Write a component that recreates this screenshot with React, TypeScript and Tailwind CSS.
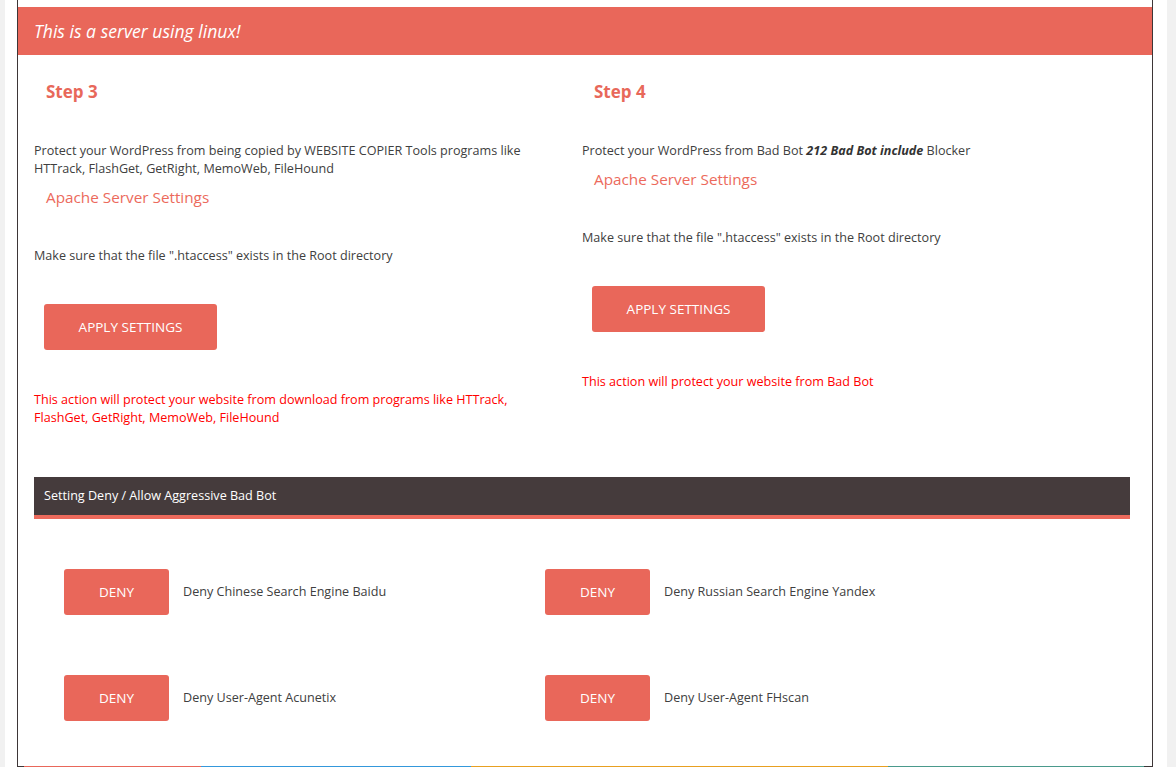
const font = { fontFamily: '"Open Sans", "Noto Sans", sans-serif' };

interface Step {
  title: string;
  intro: React.ReactNode;
  note: string;
}

const steps: Step[] = [
  {
    title: "Step 3",
    intro:
      "Protect your WordPress from being copied by WEBSITE COPIER Tools programs like HTTrack, FlashGet, GetRight, MemoWeb, FileHound",
    note: "This action will protect your website from download from programs like HTTrack, FlashGet, GetRight, MemoWeb, FileHound",
  },
  {
    title: "Step 4",
    intro: (
      <>
        Protect your WordPress from Bad Bot{" "}
        <b className="italic text-[#333]">212 Bad Bot include</b> Blocker
      </>
    ),
    note: "This action will protect your website from Bad Bot",
  },
];

const denyRules = [
  "Deny Chinese Search Engine Baidu",
  "Deny Russian Search Engine Yandex",
  "Deny User-Agent Acunetix",
  "Deny User-Agent FHscan",
];

function StepColumn({ step }: { step: Step }) {
  return (
    <div className="flex flex-col items-start pr-5">
      <h3 className="pl-3 text-[17px] leading-6 font-bold text-[#e8685a]">
        {step.title}
      </h3>
      <p className="mt-[38px] text-[12.6px] leading-[18px] text-[#404040]">
        {step.intro}
      </p>
      <p className="mt-2 pl-3 text-[15.3px] leading-[22px] text-[#ec6a5c]">
        Apache Server Settings
      </p>
      <p className="mt-[39px] text-[12.6px] leading-[18px] text-[#404040]">
        Make sure that the file ".htaccess" exists in the Root directory
      </p>
      <button className="mt-[39px] ml-[10px] h-[46px] w-[173px] rounded-[3px] bg-[#e9675a] text-[13.5px] text-white uppercase">
        Apply Settings
      </button>
      <p className="mt-[41px] text-[12.6px] leading-[18px] text-[#ff0000]">
        {step.note}
      </p>
    </div>
  );
}

export default function App() {
  return (
    <div
      className="flex h-[767px] w-[1176px] overflow-hidden bg-white"
      style={font}
    >
      <div className="w-[5px] bg-[#f1f1f1]" />
      <div className="w-[12px]" />

      <div className="flex w-[1136px] flex-col border-x border-[#3d3637]">
        <div className="mt-[7px] flex h-12 items-center bg-[#e9675a] pl-4">
          <span className="text-[17.6px] text-white italic">
            This is a server using linux!
          </span>
        </div>

        <div className="flex flex-1 flex-col pt-[25px] pr-[22px] pl-4">
          <div className="grid grid-cols-2">
            {steps.map((step) => (
              <StepColumn key={step.title} step={step} />
            ))}
          </div>

          <div className="mt-[50px] flex h-[42px] items-center border-b-4 border-[#ec6a5c] bg-[#453b3c] pl-[10px]">
            <span className="text-[12.6px] text-white">
              Setting Deny / Allow Aggressive Bad Bot
            </span>
          </div>

          <div className="grid grid-cols-[481px_1fr] gap-y-[60px] pt-[50px] pl-[30px]">
            {denyRules.map((rule) => (
              <div key={rule} className="flex items-center">
                <button className="h-[46px] w-[105px] rounded-[3px] bg-[#e9675a] text-[13.5px] text-white">
                  DENY
                </button>
                <span className="ml-[14px] text-[12.6px] text-[#404040]">
                  {rule}
                </span>
              </div>
            ))}
          </div>
        </div>

        <div className="flex h-px">
          <div className="w-[6px] bg-[#3d3637]" />
          <div className="w-[177px] bg-[#e9675a]" />
          <div className="w-[270px] bg-[#3498db]" />
          <div className="w-[417px] bg-[#e8a021]" />
          <div className="flex-1 bg-[#4a9a8c]" />
          <div className="w-[8px] bg-[#3d3637]" />
        </div>
      </div>

      <div className="w-[14px]" />
      <div className="flex-1 bg-[#f1f1f1]" />
    </div>
  );
}
